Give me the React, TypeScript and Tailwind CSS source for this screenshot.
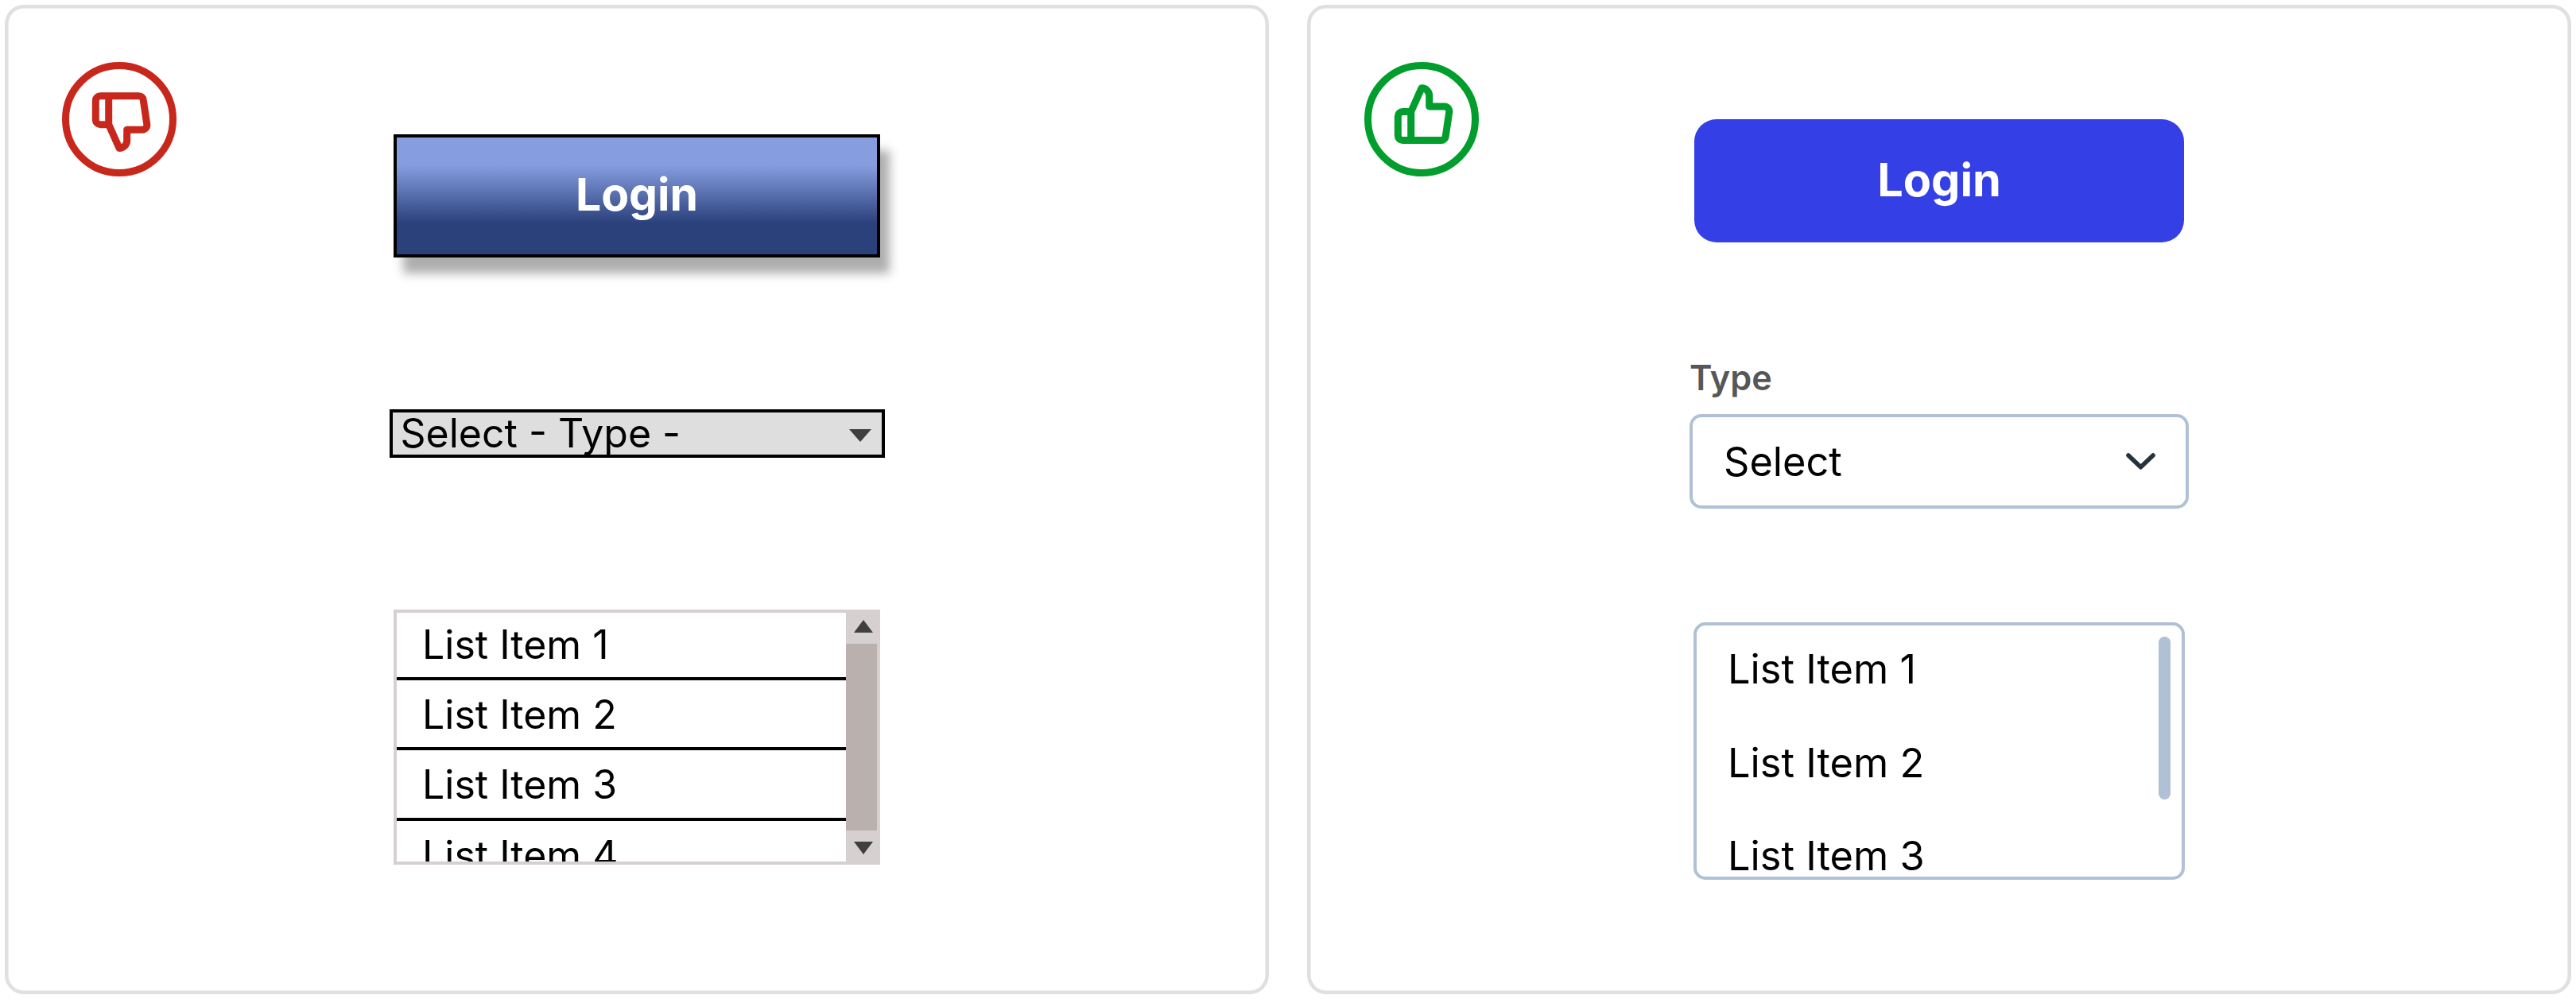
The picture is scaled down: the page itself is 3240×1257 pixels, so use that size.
import type { ReactNode } from "react";

function ThumbBadge({ up = false }: { up?: boolean }) {
  return (
    <svg
      viewBox="0 0 144 144"
      className={up ? "h-36 w-36 shrink-0 text-[#029e2d]" : "h-36 w-36 shrink-0 text-[#c8281c]"}
      fill="none"
      stroke="currentColor"
      strokeWidth={9}
      strokeLinejoin="round"
      strokeLinecap="round"
    >
      <circle cx="72" cy="72" r="67.5" />
      <g transform={up ? "translate(0 141.2) scale(1 -1)" : undefined}>
        <path d="M58.7 42.7V78.7L72 108.4A9.7 9.7 0 0 0 81.7 98.7V85.3H101A6 6 0 0 0 106.8 78.4L102.2 47.6A5.6 5.6 0 0 0 96.7 42.7H48.3A6 6 0 0 0 42.3 48.7V72.7A6 6 0 0 0 48.3 78.7H58.7" />
      </g>
    </svg>
  );
}

function Panel({ up, children }: { up?: boolean; children: ReactNode }) {
  return (
    <section className="flex h-[1245px] w-[1590px] justify-between rounded-[24px] px-[72px] shadow-[inset_0_0_0_4.6px_#e0e0e0]">
      <div className="pt-[72px]">
        <ThumbBadge up={up} />
      </div>
      <div className="flex flex-col items-center">{children}</div>
      <div className="w-36" />
    </section>
  );
}

function Triangle({ up, className }: { up?: boolean; className: string }) {
  return (
    <svg viewBox="0 0 24 16" preserveAspectRatio="none" className={className} fill="#3f3f3f">
      <path d={up ? "M12 0L24 16H0Z" : "M0 0H24L12 16Z"} />
    </svg>
  );
}

function DatedControls() {
  return (
    <>
      <button className="mt-[163px] flex h-[155px] w-[612px] items-center justify-center border-4 border-black bg-[linear-gradient(#869ddf_35px,#2b417c_108px)] pb-[3px] text-[57px] font-bold text-white shadow-[12px_20px_12px_rgba(0,0,0,0.32)]">
        Login
      </button>
      <div className="mt-[191px] flex h-[61px] w-[623px] items-center justify-between overflow-hidden border-4 border-black bg-[#dedede] pr-[13px] pl-[10px] text-[50px] leading-[53px]">
        <span>Select - Type -</span>
        <Triangle className="mt-1 h-4 w-7" />
      </div>
      <div className="mt-[191px] flex h-[321px] w-[612px] overflow-hidden border-4 border-[#d7d0d0]">
        <ul className="flex-1 text-[50px]">
          <li className="h-[85px] border-b-4 border-black pl-8 leading-[80px]">List Item 1</li>
          <li className="h-[88px] border-b-4 border-black pl-8 leading-[86px]">List Item 2</li>
          <li className="h-[89px] border-b-4 border-black pl-8 leading-[87px]">List Item 3</li>
          <li className="h-[88px] pl-8 leading-[87px]">List Item 4</li>
        </ul>
        <div className="flex w-[39px] flex-col items-center bg-[#d7d0d0]">
          <Triangle up className="mt-[9px] ml-[5px] h-4 w-6 shrink-0" />
          <div className="mt-[14px] h-[235px] w-full bg-[#bab1af]" />
          <Triangle className="mt-[14px] ml-[5px] h-4 w-6 shrink-0" />
        </div>
      </div>
    </>
  );
}

function ModernControls() {
  return (
    <>
      <button className="mt-[144px] h-[155px] w-[616px] rounded-[28px] bg-[#343fe6] pb-[3px] text-[57.6px] font-bold text-white">
        Login
      </button>
      <label className="mt-[144px] flex w-[628px] flex-col">
        <span className="-ml-px h-[72px] pl-px text-[43.2px] leading-[52px] font-semibold text-[#575757]">Type</span>
        <span className="flex h-[119px] items-center justify-between rounded-[15px] border-4 border-[#b0c1d6] pr-[38px] pl-[39px] text-[50.5px]">
          Select
          <svg viewBox="0 0 37 21" className="h-[21px] w-[37px]" fill="none" stroke="#24333c" strokeWidth={5.6} strokeLinecap="round" strokeLinejoin="round">
            <path d="M3 3L18.5 17.8L34 3" />
          </svg>
        </span>
      </label>
      <div className="mt-[143px] flex h-[324px] w-[618px] justify-between overflow-hidden rounded-[15px] border-4 border-[#b0c1d6] pr-[14px] pl-[39px]">
        <ul className="-mt-1 text-[50.5px] leading-[117.5px]">
          <li>List Item 1</li>
          <li>List Item 2</li>
          <li>List Item 3</li>
        </ul>
        <div className="mt-[14px] h-[205px] w-[15px] rounded-full bg-[#b0c1d6]" />
      </div>
    </>
  );
}

export default function App() {
  return (
    <main className="flex h-[1257px] w-[3240px] gap-12 bg-white p-1.5 font-['Inter',sans-serif] text-black">
      <Panel>
        <DatedControls />
      </Panel>
      <Panel up>
        <ModernControls />
      </Panel>
    </main>
  );
}
